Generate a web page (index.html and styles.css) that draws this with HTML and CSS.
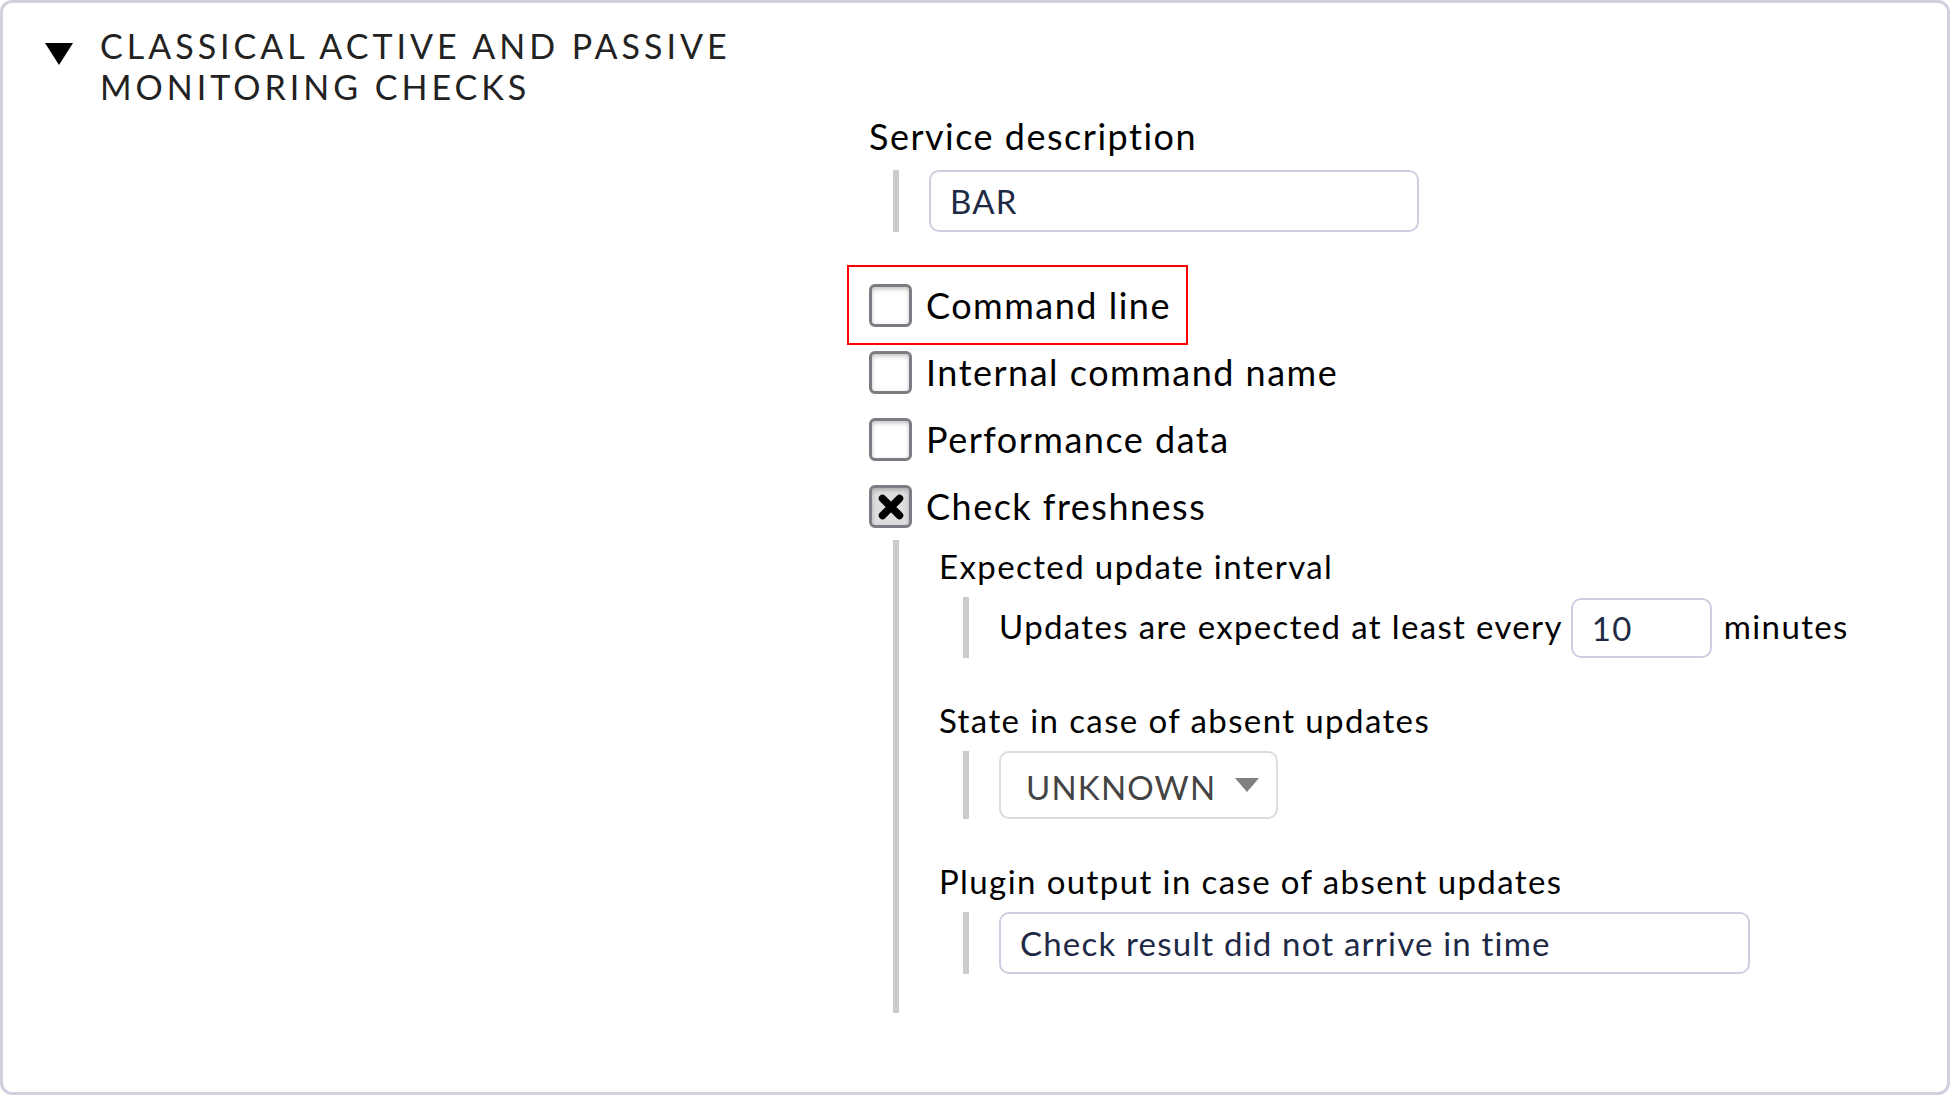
FILE: index.html
```html
<!DOCTYPE html>
<html>
<head>
<meta charset="utf-8">
<link rel="stylesheet" href="styles.css">
</head>
<body>
<div class="box">
  <div class="header">
    <svg class="tri" width="28" height="22" viewBox="0 0 28 22"><polygon points="0,0 28,0 14,22" fill="#000"/></svg>
    <h2 class="title">CLASSICAL ACTIVE AND PASSIVE<br>MONITORING CHECKS</h2>
  </div>
  <div class="form">
    <div class="label">Service description</div>
    <div class="indent">
      <div class="field wide">BAR</div>
    </div>
    <div class="checks">
      <div class="cb-row highlight"><span class="cb"></span><span class="cb-text">Command line</span></div>
      <div class="cb-row"><span class="cb"></span><span class="cb-text">Internal command name</span></div>
      <div class="cb-row"><span class="cb"></span><span class="cb-text">Performance data</span></div>
      <div class="cb-row"><span class="cb checked"><svg width="26" height="26" viewBox="0 0 26 26"><path d="M4.5 4.5 L21.5 21.5 M21.5 4.5 L4.5 21.5" stroke="#000" stroke-width="7.5" stroke-linecap="round"/></svg></span><span class="cb-text">Check freshness</span></div>
      <div class="indent outer">
        <div class="label">Expected update interval</div>
        <div class="indent inline">
          <span class="inline-text">Updates are expected at least every</span>
          <div class="field num">10</div>
          <span class="inline-text">minutes</span>
        </div>
        <div class="label sub">State in case of absent updates</div>
        <div class="indent">
          <div class="select"><span class="select-text">UNKNOWN</span><svg width="24" height="14" viewBox="0 0 24 14"><polygon points="0,0 24,0 12,14" fill="#808080"/></svg></div>
        </div>
        <div class="label sub">Plugin output in case of absent updates</div>
        <div class="indent">
          <div class="field long">Check result did not arrive in time</div>
        </div>
      </div>
    </div>
  </div>
</div>
</body>
</html>
```
FILE: styles.css
```css
html, body {
  margin: 0;
  padding: 0;
  background: #fff;
}
body {
  font-family: Lato, "Noto Sans", sans-serif;
  color: #000;
}
.box {
  box-sizing: border-box;
  width: 1950px;
  height: 1095px;
  border: 3px solid #cfd1e1;
  border-radius: 12px;
  background: #fff;
  overflow: hidden;
}
.header {
  display: flex;
  align-items: flex-start;
  padding-top: 22px;
}
.tri {
  display: block;
  margin-left: 42px;
  margin-top: 18px;
  flex: none;
}
.title {
  margin: 0 0 0 27px;
  font-weight: 400;
  font-size: 34px;
  line-height: 41px;
  letter-spacing: 4px;
  color: #222;
}
.form {
  padding-left: 866px;
  padding-top: 7px;
}
.label {
  font-size: 36px;
  line-height: 44px;
  letter-spacing: 1.5px;
  margin-bottom: 12px;
}
.indent {
  border-left: 6px solid #cccccc;
  margin-left: 24px;
  padding-left: 30px;
}
.field {
  box-sizing: border-box;
  height: 62px;
  border: 2px solid #cdd0e0;
  border-radius: 10px;
  padding-left: 19px;
  font-size: 33px;
  line-height: 58px;
  letter-spacing: 1.2px;
  color: #1e2a45;
  background: #fff;
}
.field.wide { width: 490px; }
.field.num { width: 141px; height: 60px; line-height: 56px; margin: 0 12px 0 8px; }
.field.long { width: 751px; }
.checks {
  margin-top: 40px;
}
.cb-row {
  display: flex;
  align-items: center;
  height: 67px;
}
.cb-row.highlight {
  box-sizing: border-box;
  display: inline-flex;
  height: 80px;
  border: 2px solid #ff0000;
  padding: 0 15px 0 20px;
  margin: -7px 0 -6px -22px;
  vertical-align: top;
}
.cb {
  box-sizing: border-box;
  width: 43px;
  height: 43px;
  flex: none;
  border: 3px solid #7b7d82;
  border-radius: 6px;
  background: #fff;
  box-shadow: inset 0 2px 4px rgba(0,0,0,0.25);
  display: flex;
  align-items: center;
  justify-content: center;
}
.cb.checked {
  background: #dedede;
}
.cb-text {
  margin-left: 14px;
  font-size: 36px;
  line-height: 43px;
  letter-spacing: 1.5px;
}
.indent.outer {
  padding-left: 40px;
  padding-top: 4px;
  padding-bottom: 39px;
}
.indent.inline {
  display: flex;
  align-items: center;
  height: 61px;
}
.inline-text {
  font-size: 33px;
  letter-spacing: 1.35px;
  position: relative;
  top: -2px;
}
.label.sub {
  margin-top: 40px;
}
.outer .label {
  font-size: 33px;
  letter-spacing: 1.4px;
  margin-bottom: 9px;
}
.select {
  box-sizing: border-box;
  width: 279px;
  height: 68px;
  border: 2px solid #dcdcdc;
  border-radius: 10px;
  display: flex;
  align-items: center;
  padding-left: 25px;
  padding-right: 17px;
  justify-content: space-between;
}
.select-text {
  font-size: 33px;
  letter-spacing: 1.2px;
  color: #444;
  position: relative;
  top: 2px;
}
```
